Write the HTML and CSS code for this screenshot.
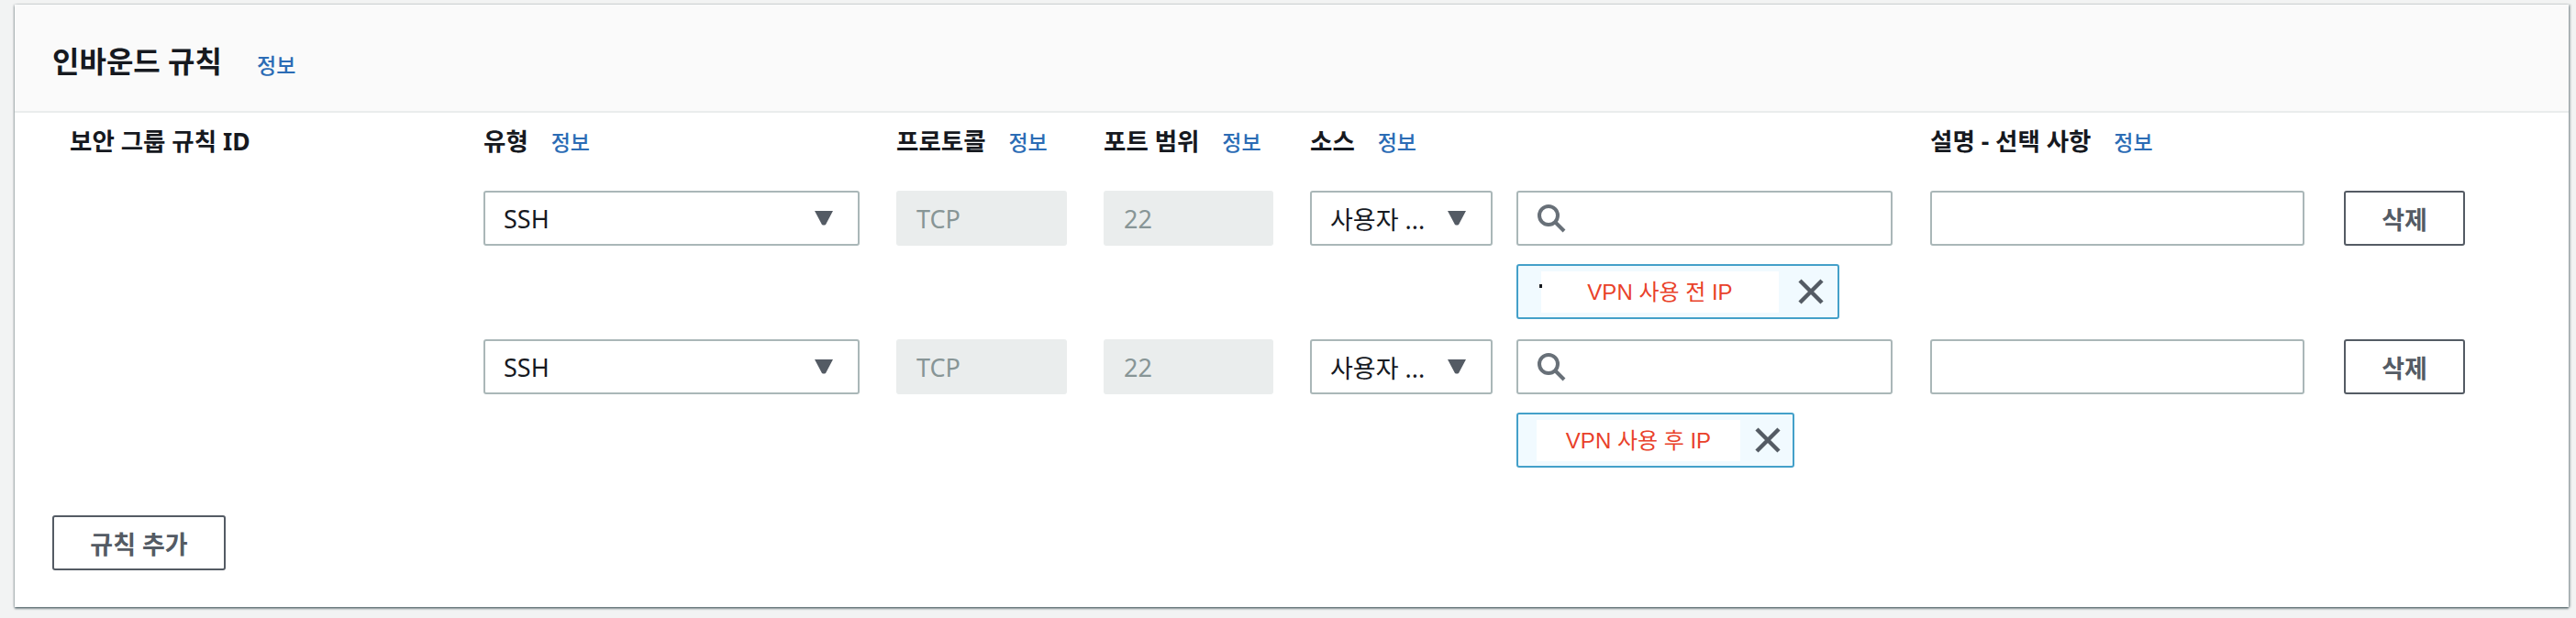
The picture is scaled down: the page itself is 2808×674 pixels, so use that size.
FILE: index.html
```html
<!DOCTYPE html>
<html lang="ko">
<head>
    <meta charset="UTF-8">
    <meta name="viewport" content="width=device-width, initial-scale=1.0">
    <title>인바운드 규칙</title>
    <link rel="stylesheet" href="styles.css">
</head>
<body>
    <div class="card">
        <div class="card-header">
            <h2 class="card-title">인바운드 규칙</h2>
            <a class="info-link title-info" href="#">정보</a>
        </div>
        <div class="card-body">
            <div class="rule-grid rule-head">
                <div class="col-label first-label">보안 그룹 규칙 ID</div>
                <div class="col-label">유형 <a class="info-link" href="#">정보</a></div>
                <div class="col-label">프로토콜 <a class="info-link" href="#">정보</a></div>
                <div class="col-label">포트 범위 <a class="info-link" href="#">정보</a></div>
                <div class="col-label">소스 <a class="info-link" href="#">정보</a></div>
                <div class="col-label">설명 - 선택 사항 <a class="info-link" href="#">정보</a></div>
            </div>

            <div class="rule-grid rule-row">
                <div></div>
                <div class="select-box"><span>SSH</span><svg class="caret" viewBox="0 0 20 16"><path d="M0 0H20L12 15Q10 16 8 15Z"/></svg></div>
                <div class="readonly-box">TCP</div>
                <div class="readonly-box">22</div>
                <div class="source-cell">
                    <div class="select-box source-select"><span>사용자 ...</span><svg class="caret" viewBox="0 0 20 16"><path d="M0 0H20L12 15Q10 16 8 15Z"/></svg></div>
                    <div class="source-values">
                        <div class="search-box">
                            <svg class="search-icon" viewBox="0 0 32 32"><circle cx="13" cy="13" r="10"/><path d="M20 20L30 30"/></svg>
                        </div>
                        <div class="token token-before">
                            <span class="token-speck"></span>
                            <span class="token-text">VPN 사용 전 IP</span>
                            <svg class="token-close" viewBox="0 0 28 28"><path d="M2 2L26 26M26 2L2 26"/></svg>
                        </div>
                    </div>
                </div>
                <input class="text-box" type="text">
                <button class="btn delete-btn">삭제</button>
            </div>

            <div class="rule-grid rule-row second-row">
                <div></div>
                <div class="select-box"><span>SSH</span><svg class="caret" viewBox="0 0 20 16"><path d="M0 0H20L12 15Q10 16 8 15Z"/></svg></div>
                <div class="readonly-box">TCP</div>
                <div class="readonly-box">22</div>
                <div class="source-cell">
                    <div class="select-box source-select"><span>사용자 ...</span><svg class="caret" viewBox="0 0 20 16"><path d="M0 0H20L12 15Q10 16 8 15Z"/></svg></div>
                    <div class="source-values">
                        <div class="search-box">
                            <svg class="search-icon" viewBox="0 0 32 32"><circle cx="13" cy="13" r="10"/><path d="M20 20L30 30"/></svg>
                        </div>
                        <div class="token token-after">
                            <span class="token-text">VPN 사용 후 IP</span>
                            <svg class="token-close" viewBox="0 0 28 28"><path d="M2 2L26 26M26 2L2 26"/></svg>
                        </div>
                    </div>
                </div>
                <input class="text-box" type="text">
                <button class="btn delete-btn">삭제</button>
            </div>

            <button class="btn add-btn">규칙 추가</button>
        </div>
    </div>
</body>
</html>
```

FILE: styles.css
```css
* {
    box-sizing: border-box;
}
html, body {
    height: 100%;
}
body {
    margin: 0;
    padding: 5px 8px 12px 16px;
    background: #f2f3f3;
    color: #16191f;
    font-family: "Noto Sans", "Noto Sans CJK KR", sans-serif;
    font-size: 26px;
    overflow: hidden;
}
.card {
    height: 657px;
    background: #fff;
    box-shadow: 0 2px 2px rgba(0, 28, 36, 0.5), 2px 0 2px rgba(0, 28, 36, 0.25), -1px 0 2px rgba(0, 28, 36, 0.2);
}
.card-header {
    height: 118px;
    padding: 7px 0 0 41px;
    display: flex;
    align-items: center;
    background: #fafafa;
    border-bottom: 2px solid #eaeded;
}
.card-title {
    margin: 0;
    font-size: 32px;
    font-weight: bold;
    line-height: 40px;
}
.info-link {
    color: #2b6cb5;
    font-size: 23px;
    font-weight: 500;
    text-decoration: none;
    margin-left: 18px;
}
.title-info {
    margin-left: 38px;
    margin-top: 6px;
}
.card-body {
    padding: 15px 0 0 41px;
}
.rule-grid {
    display: grid;
    grid-template-columns: 430px 410px 186px 185px 636px 408px 132px;
    column-gap: 40px;
}
.rule-row .delete-btn {
    margin-left: 3px;
    width: 132px;
}
.col-label {
    font-size: 26.5px;
    font-weight: bold;
    line-height: 32px;
    white-space: nowrap;
}
.first-label {
    padding-left: 19px;
}
.rule-head {
    height: 70px;
}
.select-box, .readonly-box, .text-box, .search-box {
    height: 60px;
    border-radius: 3px;
    font-size: 27px;
}
.select-box {
    display: flex;
    align-items: center;
    justify-content: space-between;
    padding: 0 27px 0 20px;
    border: 2px solid #aab7b8;
    background: #fff;
}
.caret {
    width: 20px;
    height: 16px;
    fill: #545b64;
    flex: none;
}
.readonly-box {
    display: flex;
    align-items: center;
    padding-left: 22px;
    background: #eaeded;
    color: #879596;
}
.source-cell {
    display: flex;
    gap: 26px;
}
.source-select {
    width: 199px;
    flex: none;
}
.source-values {
    width: 410px;
}
.search-box {
    display: flex;
    align-items: center;
    padding-left: 20px;
    border: 2px solid #aab7b8;
}
.search-icon {
    width: 32px;
    height: 32px;
    fill: none;
    stroke: #687078;
    stroke-width: 4px;
}
.text-box {
    width: 100%;
    border: 2px solid #aab7b8;
    background: #fff;
    padding: 0 20px;
}
.btn {
    height: 60px;
    border: 2px solid #545b64;
    border-radius: 3px;
    background: #fff;
    color: #545b64;
    font-family: inherit;
    font-size: 27px;
    font-weight: bold;
}
.second-row {
    margin-top: 22px;
}
.token {
    position: relative;
    height: 60px;
    margin-top: 20px;
    border: 2px solid #44a0c9;
    border-radius: 3px;
    background: #f1faff;
    display: flex;
    align-items: center;
}
.token-before {
    width: 352px;
    padding-left: 25px;
}
.token-after {
    width: 303px;
    padding-left: 20px;
}
.token-text {
    height: 45px;
    background: #fff;
    color: #e9412a;
    font-family: "Liberation Sans", "Noto Sans CJK KR", sans-serif;
    font-size: 24px;
    line-height: 45px;
    text-align: center;
    flex: none;
}
.token-before .token-text {
    width: 259px;
}
.token-after .token-text {
    width: 222px;
}
/* 가려진 글자가 남은 점 */
.token-speck {
    position: absolute;
    left: 23px;
    top: 20px;
    width: 3px;
    height: 4px;
    background: #16191f;
}
.token-close {
    width: 28px;
    height: 28px;
    margin-left: 21px;
    fill: none;
    stroke: #545b64;
    stroke-width: 4.5px;
    flex: none;
}
.token-after .token-close {
    margin-left: 16px;
}
.add-btn {
    display: block;
    width: 189px;
    margin-top: 52px;
}
```
